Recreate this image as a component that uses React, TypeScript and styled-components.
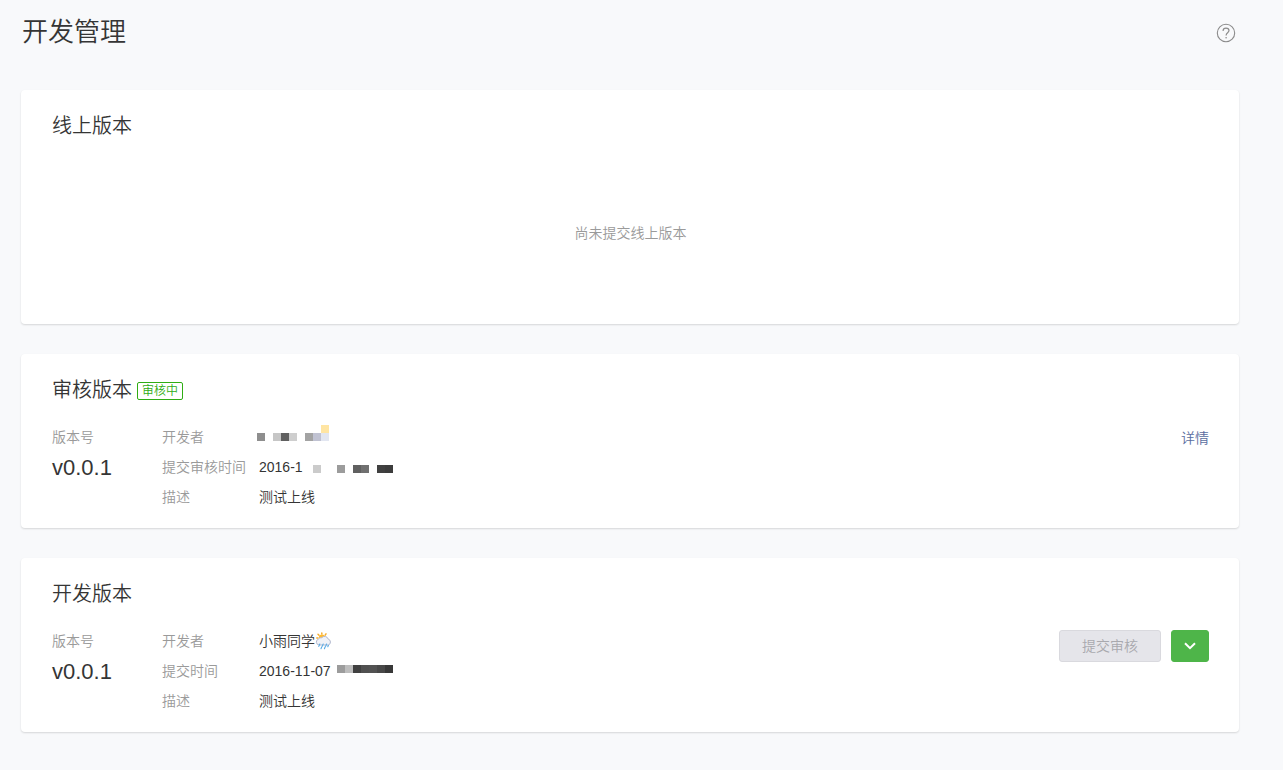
import React from 'react';
import styled, { createGlobalStyle } from 'styled-components';

const GlobalStyle = createGlobalStyle`
  * {
    box-sizing: border-box;
  }
  body {
    margin: 0;
    min-height: 100vh;
    background: #f8f9fb;
    color: #353535;
    font: 350 14px/20px "Liberation Sans", "Noto Sans CJK SC", sans-serif;
    font-kerning: none;
  }
`;

const Page = styled.main`
  padding: 12px 44px 38px 21px;
`;

const PageHeader = styled.header`
  display: flex;
  align-items: center;
  justify-content: space-between;
  height: 40px;
  margin-bottom: 38px;
  padding-left: 1px;
`;

const PageTitle = styled.h1`
  margin: 0;
  font-size: 26px;
  line-height: 40px;
  font-weight: 350;
`;

const HelpButton = styled.button`
  display: flex;
  padding: 2px 3px 0;
  border: 0;
  background: none;
  cursor: pointer;
`;

const CardList = styled.div`
  display: flex;
  flex-direction: column;
  gap: 30px;
`;

const Card = styled.section`
  padding: 21px 30px 16px 31px;
  border-radius: 4px;
  background: #fff;
  box-shadow: 0 1px 2px rgba(0, 0, 0, 0.14);
`;

const CardHeader = styled.div`
  display: flex;
  align-items: center;
  gap: 5px;
`;

const CardTitle = styled.h2`
  margin: 0;
  font-size: 20px;
  line-height: 30px;
  font-weight: 350;
`;

const Tag = styled.span`
  margin-top: 2px;
  padding: 0 4px;
  border: 1px solid #2fad14;
  border-radius: 2px;
  color: #2fad14;
  font-size: 12px;
  line-height: 16px;
`;

const EmptyText = styled.p`
  margin: 0;
  padding: 82px 0 65px;
  color: #9a9a9a;
  text-align: center;
`;

const CardBody = styled.div`
  display: flex;
  align-items: flex-start;
  margin-top: 17px;
`;

const Version = styled.div`
  width: 110px;
`;

const Label = styled.div`
  color: #9a9a9a;
  line-height: 30px;
`;

const VersionNumber = styled.div`
  font-size: 22px;
  line-height: 32px;
`;

const Details = styled.dl`
  display: grid;
  grid-template-columns: 97px auto;
  grid-auto-rows: 30px;
  flex: 1;
  margin: 0;
  line-height: 30px;
`;

const Term = styled.dt`
  color: #9a9a9a;
`;

const Value = styled.dd`
  display: flex;
  align-items: center;
  margin: 0;
`;

const Actions = styled.div`
  display: flex;
  gap: 10px;
  padding-top: 4px;
`;

const DetailLink = styled.a`
  color: #5b6ea0;
  line-height: 24px;
  text-decoration: none;
`;

const Button = styled.button`
  display: flex;
  align-items: center;
  justify-content: center;
  width: 102px;
  height: 32px;
  padding: 0;
  border: 1px solid #d9d9de;
  border-radius: 3px;
  background: #e5e5ea;
  color: #a9a9ae;
  font: inherit;
`;

const MenuButton = styled(Button)`
  width: 38px;
  border-color: #4eb549;
  background: #4eb549;
  color: #fff;
  cursor: pointer;
`;

const MosaicArt = styled.svg<{ $gap: number }>`
  margin-left: ${(p) => p.$gap}px;
`;

type Cell = [x: number, y: number, color: string];

function Mosaic({ cells, width, height, gap }: { cells: Cell[]; width: number; height: number; gap: number }) {
  return (
    <MosaicArt $gap={gap} width={width} height={height} shapeRendering="crispEdges" aria-hidden="true">
      {cells.map(([x, y, color]) => (
        <rect key={`${x}-${y}`} x={x} y={y} width="8" height="8" fill={color} />
      ))}
    </MosaicArt>
  );
}

const developerCells: Cell[] = [
  [0, 8, '#8e8e8e'],
  [16, 8, '#c6c6c6'],
  [24, 8, '#606060'],
  [32, 8, '#cecece'],
  [48, 8, '#a3a3a3'],
  [56, 8, '#c0c2d2'],
  [64, 8, '#e2e6f1'],
  [64, 0, '#ffe5a3'],
];

const reviewTimeCells: Cell[] = [
  [0, 4, '#cbcbcb'],
  [24, 4, '#9c9c9c'],
  [40, 4, '#606060'],
  [48, 4, '#707070'],
  [64, 4, '#404040'],
  [72, 4, '#3c3c3c'],
];

const submitTimeCells: Cell[] = [
  [0, 0, '#9c9c9c'],
  [8, 0, '#bdbdbd'],
  [16, 0, '#404040'],
  [24, 0, '#505050'],
  [32, 0, '#525252'],
  [40, 0, '#484848'],
  [48, 0, '#383838'],
];

function RainCloud() {
  return (
    <svg width="17" height="18" viewBox="0 0 17 18" role="img" aria-label="雨">
      <g stroke="#f7ad2b" strokeWidth="1.5" strokeLinecap="round">
        <path d="M6.8 .9v1M3 2.3l1 1M11 1.9l-.8 1.2M1.8 6h1.2" />
      </g>
      <circle cx="7" cy="5.6" r="3.1" fill="#ffba32" />
      <path
        d="M4.2 13a3 3 0 0 1-.9-5.8 3.2 3.2 0 0 1 3.4-1.5 3.8 3.8 0 0 1 6.5 1.4 3.1 3.1 0 0 1 .2 5.9z"
        fill="#f0f2f8"
        stroke="#b2b9cf"
        strokeWidth="1"
      />
      <path
        d="M4.8 12l-1 2.4M8.2 12l-1 2.4M11.6 12l-1 2.4M6.8 14.8l-.8 2M10.2 14.8l-.8 2M13.4 13.2l-.6 1.6"
        stroke="#5aace6"
        strokeWidth="1.1"
        strokeLinecap="round"
      />
    </svg>
  );
}

export default function App() {
  return (
    <Page>
      <GlobalStyle />
      <PageHeader>
        <PageTitle>开发管理</PageTitle>
        <HelpButton type="button" aria-label="帮助">
          <svg width="20" height="20" viewBox="0 0 20 20" fill="none" stroke="#8b8b8b">
            <circle cx="10" cy="10" r="8.7" strokeWidth="1.1" />
            <path d="M7 7.9c.1-1.8 1.2-2.8 3-2.8s3 1 3 2.5c0 2.2-2.9 2.3-2.9 4.8" strokeWidth="1.2" />
            <circle cx="10.1" cy="14.7" r=".8" fill="#8b8b8b" stroke="none" />
          </svg>
        </HelpButton>
      </PageHeader>

      <CardList>
        <Card>
          <CardTitle>线上版本</CardTitle>
          <EmptyText>尚未提交线上版本</EmptyText>
        </Card>

        <Card>
          <CardHeader>
            <CardTitle>审核版本</CardTitle>
            <Tag>审核中</Tag>
          </CardHeader>
          <CardBody>
            <Version>
              <Label>版本号</Label>
              <VersionNumber>v0.0.1</VersionNumber>
            </Version>
            <Details>
              <Term>开发者</Term>
              <Value>
                <Mosaic cells={developerCells} width={72} height={24} gap={-2} />
              </Value>
              <Term>提交审核时间</Term>
              <Value>
                2016-1
                <Mosaic cells={reviewTimeCells} width={80} height={12} gap={10} />
              </Value>
              <Term>描述</Term>
              <Value>测试上线</Value>
            </Details>
            <Actions>
              <DetailLink href="#detail">详情</DetailLink>
            </Actions>
          </CardBody>
        </Card>

        <Card>
          <CardTitle>开发版本</CardTitle>
          <CardBody>
            <Version>
              <Label>版本号</Label>
              <VersionNumber>v0.0.1</VersionNumber>
            </Version>
            <Details>
              <Term>开发者</Term>
              <Value>
                小雨同学
                <RainCloud />
              </Value>
              <Term>提交时间</Term>
              <Value>
                2016-11-07
                <Mosaic cells={submitTimeCells} width={56} height={12} gap={6} />
              </Value>
              <Term>描述</Term>
              <Value>测试上线</Value>
            </Details>
            <Actions>
              <Button type="button" disabled>
                提交审核
              </Button>
              <MenuButton type="button" aria-label="更多操作">
                <svg width="12" height="8" viewBox="0 0 12 8" fill="none" stroke="currentColor" strokeWidth="2">
                  <path d="M1 1.2l5 5 5-5" />
                </svg>
              </MenuButton>
            </Actions>
          </CardBody>
        </Card>
      </CardList>
    </Page>
  );
}
